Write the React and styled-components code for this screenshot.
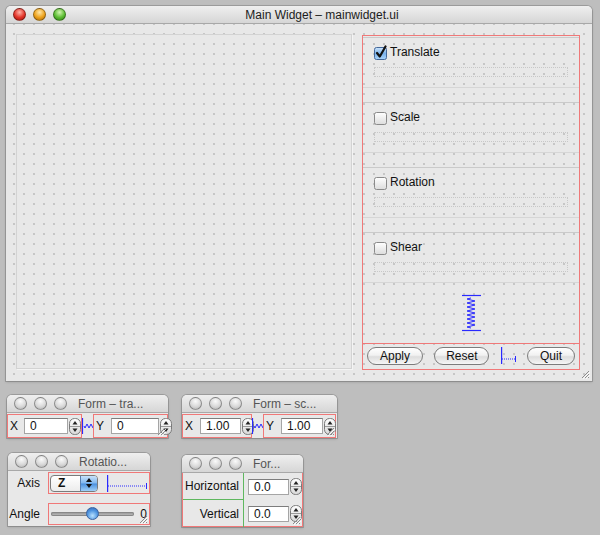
import React from "react";
import styled, { createGlobalStyle } from "styled-components";

const GlobalStyle = createGlobalStyle`
  body {
    margin: 0;
    background: #bebebe;
    font-family: "Liberation Sans", Arial, sans-serif;
    font-size: 12px;
    color: #111;
  }
`;

const RED = "#f07878";
const BLUE = "#2a2aff";

const Page = styled.div`
  width: 600px;
  height: 535px;
  padding: 6px 0 0 6px;
  box-sizing: border-box;
  overflow: hidden;
`;

const Window = styled.div`
  position: relative;
  width: ${(p) => p.$w}px;
  margin-left: ${(p) => p.$x || 0}px;
  margin-top: ${(p) => p.$y || 0}px;
  border-radius: 5px 5px 0 0;
  background: #e8e8e8;
  box-shadow: 0 0 0 1px rgba(0, 0, 0, 0.16), 0 1px 3px rgba(0, 0, 0, 0.18);
  display: flex;
  flex-direction: column;
`;

const TitleBar = styled.div`
  height: 18px;
  box-sizing: border-box;
  display: flex;
  align-items: center;
  padding-left: 7px;
  border-radius: 5px 5px 0 0;
  background: linear-gradient(#efefef, #d6d6d6);
  border-bottom: 1px solid #a8a8a8;
`;

const Lights = styled.div`
  display: flex;
  gap: 7px;
`;

const Light = styled.span`
  width: 11px;
  height: 11px;
  border-radius: 50%;
  border: 1px solid rgba(0, 0, 0, 0.35);
  background: ${(p) =>
    ({
      red: "radial-gradient(circle at 50% 30%, #ffb3a8 0, #e3352a 55%, #9a1208 100%)",
      yellow: "radial-gradient(circle at 50% 30%, #ffe7a8 0, #eda21c 55%, #a56408 100%)",
      green: "radial-gradient(circle at 50% 30%, #d2f5b0 0, #5cbd33 55%, #2b7a12 100%)",
      grey: "radial-gradient(circle at 50% 30%, #fbfbfb 0, #d6d6d6 60%, #a8a8a8 100%)",
    })[p.$c]};
`;

const Title = styled.div`
  flex: 1;
  white-space: nowrap;
  text-align: ${(p) => (p.$center ? "center" : "left")};
  padding: ${(p) => (p.$center ? "0 14px 0 0" : "0 0 0 11px")};
  color: ${(p) => (p.$center ? "#1c1c1c" : "#555")};
  font-size: 12px;
`;

const MainBody = styled.div`
  display: grid;
  grid-template-columns: 336px 218px;
  grid-template-rows: 335px;
  gap: 10px;
  padding: 10px 12px 12px 10px;
  height: 357px;
  box-sizing: border-box;
  background-color: #e8e8e8;
  background-image: radial-gradient(circle, #c6c6c6 0.7px, transparent 1px);
  background-size: 10px 10px;
  background-position: 3px 5px;
`;

const Canvas = styled.div`
  border: 1px solid #d3d3d3;
  box-shadow: 1px 1px 0 #f4f4f4;
`;

const Panel = styled.div`
  box-sizing: border-box;
  height: 335px;
  margin-top: 1px;
  border: 1px solid ${RED};
  display: flex;
  flex-direction: column;
`;

const GroupFrame = styled.div`
  height: 51px;
  flex: none;
  margin: 1px 0 13px 0;
  box-sizing: border-box;
  border-top: 1px solid #cacaca;
  border-bottom: 1px solid #d6d6d6;
  padding: 7px 11px 0 10px;
  display: flex;
  flex-direction: column;
`;

const CheckRow = styled.label`
  display: flex;
  align-items: center;
  gap: 2px;
  height: 14px;
  font-size: 12px;
`;

const Placeholder = styled.div`
  margin: 8px 0 0 1px;
  height: 8px;
  border: 1px dotted #c8c8c8;
`;

const SpacerArea = styled.div`
  flex: 1;
  display: flex;
  align-items: center;
  justify-content: center;
  margin-top: -13px;
`;

const ButtonRow = styled.div`
  height: 26px;
  flex: none;
  box-sizing: border-box;
  border-top: 1px solid ${RED};
  display: flex;
  align-items: center;
  justify-content: space-between;
  padding: 0 4px 2px 4px;
`;

const AquaButton = styled.button`
  width: ${(p) => p.$w}px;
  height: 18px;
  padding: 0;
  border: 1px solid #7c7c7c;
  border-radius: 9px;
  background: linear-gradient(#ffffff 0%, #f1f1f1 45%, #dddddd 55%, #f6f6f6 100%);
  font-family: "Liberation Sans", Arial, sans-serif;
  font-size: 12px;
  color: #111;
`;

const Grip = styled.svg`
  position: absolute;
  right: 2px;
  bottom: 2px;
`;

const FormRow = styled.div`
  display: flex;
  margin-top: 1px;
  height: 24px;
  align-items: stretch;
`;

const RedBox = styled.div`
  width: ${(p) => p.$w}px;
  box-sizing: border-box;
  border: 1px solid ${RED};
  display: flex;
  align-items: center;
  padding-left: 2px;
  gap: ${(p) => p.$gap || 6}px;
`;

const Label = styled.span`
  font-size: 12px;
  color: #111;
`;

const SpinWrap = styled.div`
  display: flex;
  align-items: center;
  gap: 1px;
`;

const SpinField = styled.div`
  width: ${(p) => p.$w}px;
  height: 16px;
  box-sizing: border-box;
  background: #fff;
  border: 1px solid #a5a5a5;
  border-top-color: #7d7d7d;
  padding-left: 5px;
  font-size: 12px;
  line-height: 14px;
`;

const HSpring = styled.svg`
  flex: none;
  align-self: center;
`;

const RotBody = styled.div`
  display: grid;
  grid-template-columns: 40px 102px;
  grid-template-rows: 22px 22px;
  row-gap: 9px;
  padding: 1px 0 1px 0;
`;

const FormLabel = styled.div`
  display: flex;
  align-items: center;
  justify-content: flex-end;
  padding-right: 8px;
  font-size: 12px;
`;

const RedCell = styled.div`
  border: 1px solid ${RED};
  display: flex;
  align-items: center;
  padding-left: 1px;
  gap: ${(p) => p.$gap || 0}px;
`;

const Combo = styled.div`
  width: 48px;
  height: 17px;
  box-sizing: border-box;
  border: 1px solid #7a7a7a;
  border-radius: 4px;
  display: flex;
  overflow: hidden;
  background: linear-gradient(#ffffff, #ececec);
  flex: none;
`;

const ComboText = styled.span`
  flex: 1;
  padding-left: 7px;
  font-weight: bold;
  font-size: 12px;
  line-height: 15px;
`;

const ComboArrow = styled.span`
  width: 16px;
  display: flex;
  align-items: center;
  justify-content: center;
  background: linear-gradient(#c8e2fb 0%, #7fb6ee 48%, #4a8fdd 52%, #9fd0fa 100%);
  border-left: 1px solid #5a7fae;
`;

const SliderTrack = styled.div`
  position: relative;
  width: 83px;
  height: 4px;
  margin-left: 1px;
  border-radius: 2px;
  background: linear-gradient(#8e8e8e, #c4c4c4);
  box-shadow: inset 0 0 0 1px #888;
`;

const Knob = styled.span`
  position: absolute;
  top: -5px;
  width: 13px;
  height: 13px;
  border-radius: 50%;
  box-sizing: border-box;
  border: 1px solid #3b64a0;
  background: radial-gradient(circle at 50% 70%, #b9e2ff 0, #4f95e0 55%, #2d62b4 100%);
`;

const SliderValue = styled.span`
  margin-left: auto;
  margin-right: 2px;
  font-size: 12px;
`;

const ScaleForm = styled.div`
  display: grid;
  grid-template-columns: 61px 60px;
  grid-template-rows: 27px 27px;
  border: 1px solid ${RED};
  border-top: none;
  height: 54px;
  box-sizing: border-box;
`;

const GridLabel = styled.div`
  display: flex;
  align-items: center;
  justify-content: flex-end;
  padding-right: 4px;
  font-size: 12px;
  border-right: 1px solid #5fb85f;
  border-bottom: ${(p) => (p.$line ? "1px solid #5fb85f" : "none")};
`;

const GridField = styled.div`
  display: flex;
  align-items: center;
  padding-left: 4px;
`;

const SmallRow = styled.div`
  display: flex;
  align-items: flex-start;
  margin-top: ${(p) => p.$mt}px;
`;

function Stepper() {
  return (
    <svg width="12" height="17" viewBox="0 0 12 17">
      <defs>
        <linearGradient id="stp" x1="0" y1="0" x2="0" y2="1">
          <stop offset="0" stopColor="#ffffff" />
          <stop offset="1" stopColor="#d8d8d8" />
        </linearGradient>
      </defs>
      <rect x="0.5" y="0.5" width="11" height="16" rx="5" fill="url(#stp)" stroke="#7a7a7a" />
      <line x1="1" y1="8.5" x2="11" y2="8.5" stroke="#9a9a9a" />
      <path d="M6 3 L8.5 6.5 L3.5 6.5 Z" fill="#222" />
      <path d="M6 14 L8.5 10.5 L3.5 10.5 Z" fill="#222" />
    </svg>
  );
}

function Spin({ value, w }) {
  return (
    <SpinWrap>
      <SpinField $w={w}>{value}</SpinField>
      <Stepper />
    </SpinWrap>
  );
}

function CheckBox({ checked }) {
  return (
    <svg width="15" height="15" viewBox="0 0 15 15">
      <defs>
        <linearGradient id="cbOff" x1="0" y1="0" x2="0" y2="1">
          <stop offset="0" stopColor="#ffffff" />
          <stop offset="1" stopColor="#dcdcdc" />
        </linearGradient>
        <linearGradient id="cbOn" x1="0" y1="0" x2="0" y2="1">
          <stop offset="0" stopColor="#cfe6fc" />
          <stop offset="0.5" stopColor="#7ab2ec" />
          <stop offset="1" stopColor="#a9d4fb" />
        </linearGradient>
      </defs>
      <rect
        x="1.5"
        y="2.5"
        width="12"
        height="12"
        rx="2"
        fill={checked ? "url(#cbOn)" : "url(#cbOff)"}
        stroke={checked ? "#45689a" : "#8a8a8a"}
      />
      {checked && (
        <path d="M4 8 L6.8 11.5 L12.5 1.5" fill="none" stroke="#111" strokeWidth="2.2" strokeLinecap="round" strokeLinejoin="round" />
      )}
    </svg>
  );
}

function ResizeGrip() {
  return (
    <Grip width="10" height="10" viewBox="0 0 10 10">
      <path d="M9 2 L2 9 M9 5 L5 9 M9 8 L8 9" stroke="#8c8c8c" strokeWidth="1" />
      <path d="M10 3 L3 10 M10 6 L6 10" stroke="#ffffff" strokeWidth="1" opacity="0.8" />
    </Grip>
  );
}

function VSpring() {
  let d = "M9 4";
  for (let y = 4; y < 34; y += 2) {
    d += ` L${y % 4 === 0 ? 5 : 13} ${y + 1} L9 ${y + 2}`;
  }
  return (
    <svg width="19" height="38" viewBox="0 0 19 38">
      <line x1="0" y1="1.5" x2="19" y2="1.5" stroke={BLUE} strokeWidth="1.2" />
      <line x1="0" y1="36.5" x2="19" y2="36.5" stroke={BLUE} strokeWidth="1.2" />
      <path d={d} fill="none" stroke={BLUE} strokeWidth="1" />
    </svg>
  );
}

function SquishSpring({ w }) {
  let d = `M2 9`;
  for (let x = 2; x < w; x += 2) {
    d += ` L${x + 1} ${x % 4 === 0 ? 7 : 11}`;
  }
  return (
    <HSpring width={w} height="18" viewBox={`0 0 ${w} 18`}>
      <line x1="0.5" y1="1" x2="0.5" y2="17" stroke={BLUE} strokeWidth="1.2" />
      <path d={d} fill="none" stroke={BLUE} strokeWidth="1" />
    </HSpring>
  );
}

function Bracket({ w, h = 17, y }) {
  return (
    <HSpring width={w} height={h} viewBox={`0 0 ${w} ${h}`}>
      <line x1="0.5" y1="0" x2="0.5" y2={h} stroke={BLUE} strokeWidth="1.4" />
      <line x1="1" y1={y} x2={w - 1} y2={y} stroke={BLUE} strokeWidth="1" strokeDasharray="1 1" />
      <line x1={w - 0.5} y1={y - 3} x2={w - 0.5} y2={y + 3} stroke={BLUE} strokeWidth="1" />
    </HSpring>
  );
}

function ComboArrows() {
  return (
    <svg width="8" height="12" viewBox="0 0 8 12">
      <path d="M4 1 L7 5 L1 5 Z" fill="#111" />
      <path d="M4 11 L7 7 L1 7 Z" fill="#111" />
    </svg>
  );
}

function WindowTitle({ text, active, center }) {
  const colors = active ? ["red", "yellow", "green"] : ["grey", "grey", "grey"];
  return (
    <TitleBar>
      <Lights>
        {colors.map((c, i) => (
          <Light key={i} $c={c} />
        ))}
      </Lights>
      <Title $center={center}>{text}</Title>
    </TitleBar>
  );
}

const groups = [
  { name: "Translate", checked: true },
  { name: "Scale" },
  { name: "Rotation" },
  { name: "Shear" },
];

export default function App() {
  return (
    <Page>
      <GlobalStyle />
      <Window $w={586}>
        <WindowTitle text="Main Widget – mainwidget.ui" active center />
        <MainBody>
          <Canvas />
          <Panel>
            {groups.map((g) => (
              <GroupFrame key={g.name}>
                <CheckRow>
                  <CheckBox checked={g.checked} />
                  {g.name}
                </CheckRow>
                <Placeholder />
              </GroupFrame>
            ))}
            <SpacerArea>
              <VSpring />
            </SpacerArea>
            <ButtonRow>
              <AquaButton $w={56}>Apply</AquaButton>
              <AquaButton $w={55}>Reset</AquaButton>
              <Bracket w={15} y={12} />
              <AquaButton $w={48}>Quit</AquaButton>
            </ButtonRow>
          </Panel>
        </MainBody>
        <ResizeGrip />
      </Window>

      <SmallRow $mt={14}>
        <Window $w={161} $x={1}>
          <WindowTitle text="Form – tra..." />
          <FormRow>
            <RedBox $w={75}>
              <Label>X</Label>
              <Spin value="0" w={44} />
            </RedBox>
            <SquishSpring w={11} />
            <RedBox $w={75} $gap={7}>
              <Label>Y</Label>
              <Spin value="0" w={48} />
            </RedBox>
          </FormRow>
          <ResizeGrip />
        </Window>

        <Window $w={155} $x={14}>
          <WindowTitle text="Form – sc..." />
          <FormRow>
            <RedBox $w={70} $gap={7}>
              <Label>X</Label>
              <Spin value="1.00" w={41} />
            </RedBox>
            <SquishSpring w={11} />
            <RedBox $w={73} $gap={7}>
              <Label>Y</Label>
              <Spin value="1.00" w={42} />
            </RedBox>
          </FormRow>
          <ResizeGrip />
        </Window>
      </SmallRow>

      <SmallRow $mt={15}>
        <Window $w={142} $x={2}>
          <WindowTitle text="Rotatio..." />
          <RotBody>
            <FormLabel>Axis</FormLabel>
            <RedCell $gap={9}>
              <Combo>
                <ComboText>Z</ComboText>
                <ComboArrow>
                  <ComboArrows />
                </ComboArrow>
              </Combo>
              <Bracket w={40} y={11} />
            </RedCell>
            <FormLabel>Angle</FormLabel>
            <RedCell>
              <SliderTrack>
                <Knob style={{ left: 35 }} />
              </SliderTrack>
              <SliderValue>0</SliderValue>
            </RedCell>
          </RotBody>
          <ResizeGrip />
        </Window>

        <Window $w={121} $x={32} $y={2}>
          <WindowTitle text="For..." />
          <ScaleForm>
            <GridLabel $line>Horizontal</GridLabel>
            <GridField>
              <Spin value="0.0" w={41} />
            </GridField>
            <GridLabel>Vertical</GridLabel>
            <GridField>
              <Spin value="0.0" w={41} />
            </GridField>
          </ScaleForm>
          <ResizeGrip />
        </Window>
      </SmallRow>
    </Page>
  );
}
